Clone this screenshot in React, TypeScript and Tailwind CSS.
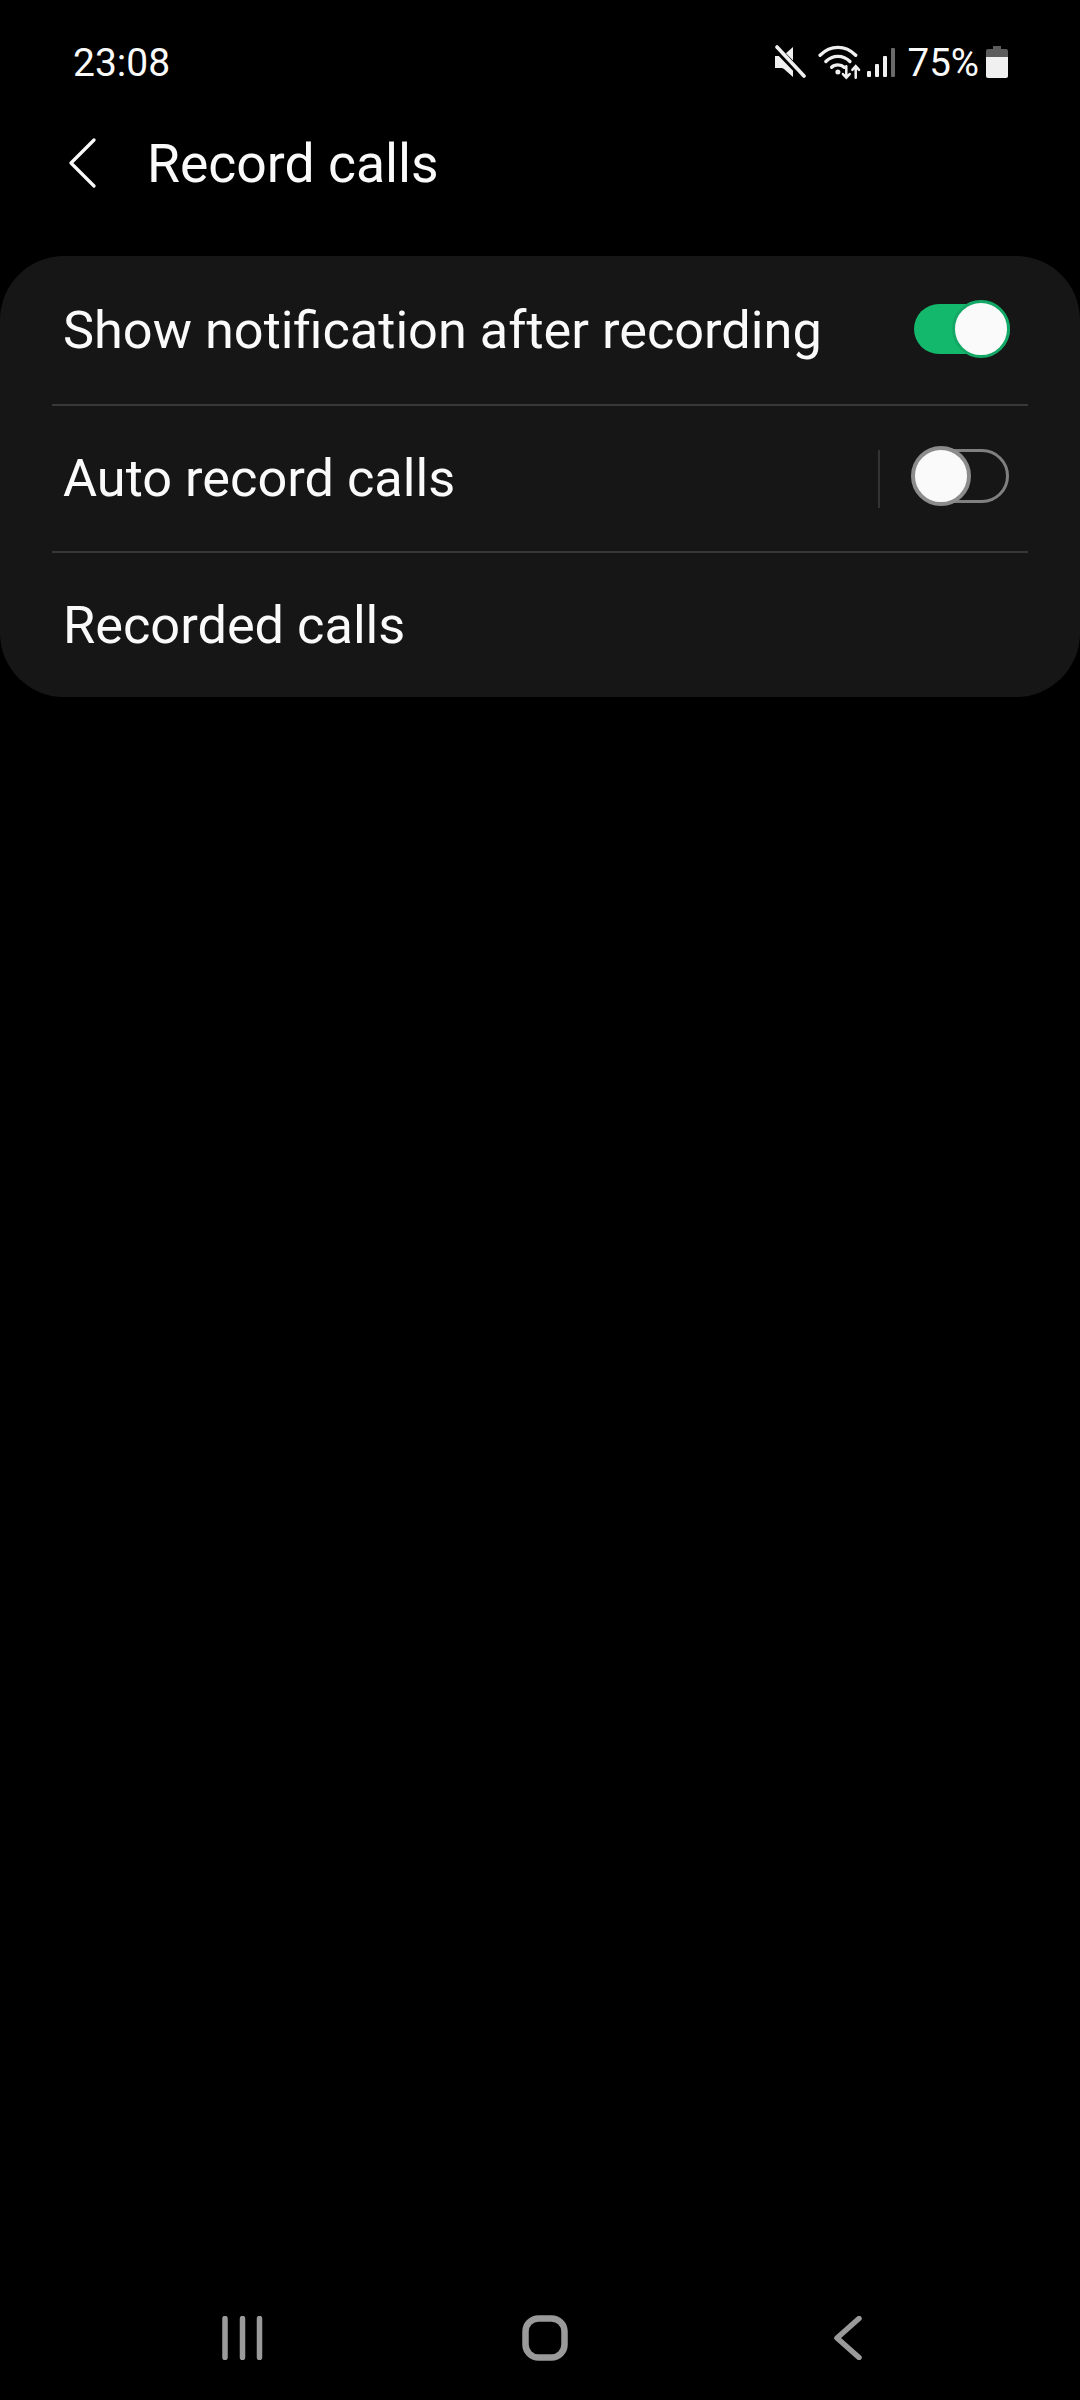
export default function App() {
  const font = { fontFamily: "Roboto, sans-serif" };
  return (
    <div className="w-[1080px] h-[2400px] bg-black text-[#fafafa] flex flex-col overflow-hidden" style={font}>
      {/* Status bar */}
      <div className="h-[124px] shrink-0 flex items-center justify-between pl-[73px] pr-[72px]">
        <span className="text-[39px] leading-none pt-[2px]">23:08</span>
        <div className="flex items-center">
          <svg width="32" height="34" viewBox="0 0 32 34" className="mr-[12px]">
            <path d="M1 11h7l2-1 L19 2 v30 l-9-8 -2-1H1z" fill="#f0f0f0" />
            <path d="M2 3 L29 31" stroke="#000" strokeWidth="7" />
            <path d="M3 2 L30 31" stroke="#f0f0f0" strokeWidth="3.6" strokeLinecap="round" />
          </svg>
          <svg width="44" height="36" viewBox="0 0 42 34" fill="none" stroke="#f0f0f0" strokeLinecap="round" className="mr-[4px]">
            <path d="M2 10.5 C12 0.5 26 0.5 36 10.5" strokeWidth="3.2" />
            <path d="M7.5 16.5 C14 10 24 10 30.5 16.5" strokeWidth="3.2" />
            <path d="M13 22 C16 19 22 19 25 22" strokeWidth="3.2" />
            <circle cx="19" cy="26.5" r="2.4" fill="#f0f0f0" stroke="none" />
            <path d="M27 21v11M23.8 28.5 27 32l3.2-3.5" strokeWidth="2.4" />
            <path d="M36 32V21M32.8 24.5 36 21l3.2 3.5" strokeWidth="2.4" />
          </svg>
          <svg width="30" height="34" viewBox="0 0 30 34" className="mr-[12px]">
            <rect x="1" y="26" width="4" height="6" rx="1" fill="#f0f0f0" />
            <rect x="9" y="19" width="4" height="13" rx="1" fill="#f0f0f0" />
            <rect x="17" y="11" width="4" height="21" rx="1" fill="#f0f0f0" />
            <rect x="25" y="3" width="4" height="29" rx="1" fill="#6a6a6a" />
          </svg>
          <span className="text-[38.5px] leading-none mr-[7px] pt-[2px]">75%</span>
          <svg width="22" height="32" viewBox="0 0 22 32">
            <path d="M7 0h8v3h5a2 2 0 0 1 2 2v8H0V5a2 2 0 0 1 2-2h5z" fill="#5c5c5c" />
            <path d="M0 11h22v19a2 2 0 0 1-2 2H2a2 2 0 0 1-2-2z" fill="#f0f0f0" />
          </svg>
        </div>
      </div>

      {/* Header */}
      <div className="h-[78px] shrink-0 flex items-center pl-[68px]">
        <svg width="28" height="50" viewBox="0 0 28 50" fill="none" stroke="#fafafa" strokeWidth="3.2" strokeLinecap="round" strokeLinejoin="round">
          <path d="M26 2 L3 25 L26 48" />
        </svg>
        <span className="ml-[51px] text-[53.5px] leading-none pt-[2px]">Record calls</span>
      </div>

      {/* Card */}
      <div className="mt-[54px] h-[441px] shrink-0 bg-[#161616] rounded-[64px] flex flex-col">
        <div className="h-[148px] flex items-center justify-between pl-[63px] pr-[70px]">
          <span className="text-[52.3px] leading-none">Show notification after recording</span>
          <div className="relative w-[96px] h-[50px] mb-[2px] rounded-full bg-[#14b86c]">
            <div className="absolute right-0 top-[-4px] w-[58px] h-[58px] rounded-full bg-[#fafafa] border-[3px] border-[#14a866]" />
          </div>
        </div>
        <div className="mx-[52px] h-[2px] bg-[#383838]" />
        <div className="h-[145px] flex items-center pl-[63px] pr-[71px]">
          <span className="text-[52.3px] leading-none flex-1">Auto record calls</span>
          <div className="w-[2px] h-[58px] bg-[#333333] mr-[32px]" />
          <div className="relative w-[97px] h-[54px] mb-[6px] rounded-full border-[3px] border-[#808080]">
            <div className="absolute left-[-4px] top-[-6px] w-[60px] h-[60px] rounded-full bg-[#fafafa] border-[4px] border-[#8c8c8c]" />
          </div>
        </div>
        <div className="mx-[52px] h-[2px] bg-[#383838]" />
        <div className="flex-1 flex items-center pl-[63px]">
          <span className="text-[52.3px] leading-none">Recorded calls</span>
        </div>
      </div>

      {/* Spacer */}
      <div className="flex-1" />

      {/* Nav bar */}
      <div className="h-[126px] shrink-0 flex items-start justify-between pl-[222px] pr-[218px] pt-[42px]">
        <svg width="44" height="44" viewBox="0 0 44 44" stroke="#9a9a9a" strokeWidth="5.5" strokeLinecap="round">
          <path d="M3 2.5V41.5M20.5 2.5V41.5M37.5 2.5V41.5" />
        </svg>
        <svg width="46" height="46" viewBox="0 0 46 46" fill="none" stroke="#9a9a9a" strokeWidth="6.5" className="mr-[10px] mt-[-1px]">
          <rect x="3.5" y="3.5" width="39" height="39" rx="13" />
        </svg>
        <svg width="28" height="44" viewBox="0 0 28 44" fill="none" stroke="#9a9a9a" strokeWidth="5.5" strokeLinecap="round" strokeLinejoin="round">
          <path d="M25 2.5 L3 22 L25 41.5" />
        </svg>
      </div>
    </div>
  );
}
